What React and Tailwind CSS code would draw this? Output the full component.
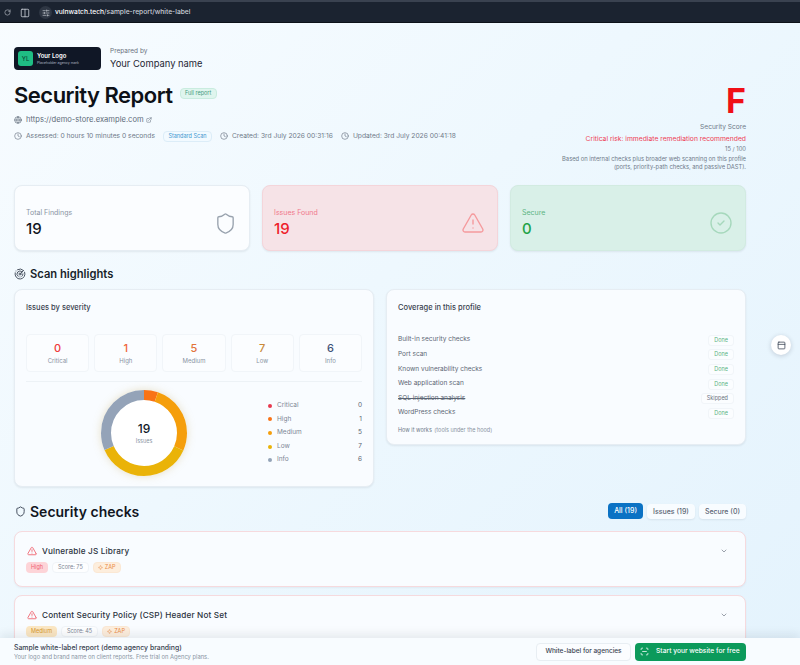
import React from "react";
import { RotateCw, Columns2, SlidersHorizontal, Globe, ExternalLink, Clock, Shield, TriangleAlert, CircleCheck, Radar, ChevronDown, ScanLine, PanelTop, Sparkle } from "lucide-react";

const severity = [
  { label: "Critical", value: 0, numClass: "text-[#ef3a3a]", dot: "bg-[#e8394f]" },
  { label: "High", value: 1, numClass: "text-[#f0643a]", dot: "bg-[#f97316]" },
  { label: "Medium", value: 5, numClass: "text-[#e2733a]", dot: "bg-[#f59e0b]" },
  { label: "Low", value: 7, numClass: "text-[#c98a3a]", dot: "bg-[#eab308]" },
  { label: "Info", value: 6, numClass: "text-[#3f5277]", dot: "bg-[#94a3b8]" },
];

const coverage = [
  { name: "Built-in security checks", status: "Done" },
  { name: "Port scan", status: "Done" },
  { name: "Known vulnerability checks", status: "Done" },
  { name: "Web application scan", status: "Done" },
  { name: "SQL injection analysis", status: "Skipped" },
  { name: "WordPress checks", status: "Done" },
];

const Donut = () => {
  const r = 38;
  const circ = 2 * Math.PI * r;
  const segs = [
    { v: 1, color: "#f97316" },
    { v: 5, color: "#f59e0b" },
    { v: 7, color: "#eab308" },
    { v: 6, color: "#94a3b8" },
  ];
  let acc = 0;
  return (
    <div className="relative w-[86px] h-[86px] rounded-full shadow-[0_0_8px_rgba(200,170,90,0.35)]">
      <svg width="86" height="86" viewBox="0 0 86 86" className="-rotate-90">
        <circle cx="43" cy="43" r="33" fill="#ffffff" />
        {segs.map((s) => {
          const len = (s.v / 19) * circ;
          const el = (
            <circle
              key={s.color}
              cx="43"
              cy="43"
              r={r}
              fill="none"
              stroke={s.color}
              strokeWidth="10"
              strokeDasharray={`${len} ${circ - len}`}
              strokeDashoffset={-acc}
            />
          );
          acc += len;
          return el;
        })}
      </svg>
      <div className="absolute inset-0 flex flex-col items-center justify-center">
        <div className="text-[12px] leading-[14px] font-medium text-[#111827]">19</div>
        <div className="text-[5.5px] leading-[8px] text-[#8b95a5] mt-[1px]">Issues</div>
      </div>
    </div>
  );
};

const StatCard = ({ label, value, box, labelClass, valueClass, icon }) => (
  <div className={`h-[66px] rounded-[8px] border pl-[11px] pr-[12px] pt-[10px] flex items-center justify-between shadow-[0_1px_2px_rgba(15,23,42,0.08)] ${box}`}>
    <div>
      <div className={`text-[7px] leading-[10px] ${labelClass}`}>{label}</div>
      <div className={`text-[15px] leading-[20px] font-medium mt-[1px] ${valueClass}`}>{value}</div>
    </div>
    {icon}
  </div>
);

const CheckCard = ({ title, level, levelClass, score }) => (
  <div className="h-[56px] rounded-[8px] border border-[#f6dade] bg-[#f9fcff] shadow-[0_1px_2px_rgba(15,23,42,0.05)] pl-[11px] pr-[17px] pt-[12px]">
    <div className="flex items-start justify-between">
      <div>
        <div className="flex items-center gap-[5px] h-[14px] ml-[1px]">
          <TriangleAlert size={10} className="text-[#ef5a66]" />
          <span className="text-[8.2px] font-medium text-[#2b3340] tracking-[0.15px]">{title}</span>
        </div>
        <div className="flex items-center gap-[4px] mt-[4px]">
          <span className={`h-[11px] px-[5px] rounded-[4px] text-[5.5px] leading-[11px] ${levelClass}`}>{level}</span>
          <span className="h-[11px] px-[5px] rounded-[4px] border border-[#f0f4f8] bg-[#fdfeff] text-[5.5px] leading-[9px] text-[#7b8594]">Score: {score}</span>
          <span className="h-[11px] px-[4px] rounded-[4px] bg-[#fdeedd] border border-[#fbe8d4] text-[5.5px] leading-[9px] text-[#ea8a45] flex items-center gap-[2px]">
            <Sparkle size={5} />
            ZAP
          </span>
        </div>
      </div>
      <ChevronDown size={8} className="text-[#6b7280] mt-[3px]" />
    </div>
  </div>
);

const App = () => {
  return (
    <div className="relative h-[665px] w-[800px] overflow-hidden font-['Inter',sans-serif] bg-[linear-gradient(135deg,#f8fcff_0%,#eef8fe_45%,#e4f3fd_100%)]">
      {/* browser bar */}
      <div className="h-[23px] bg-[#1b2330] border-t-[2px] border-t-[#3a4250] border-b border-b-[#0d1219] flex items-center pl-[4px] pt-[1px] text-[#c5cad2]">
        <RotateCw size={7} />
        <Columns2 size={10} className="ml-[9px]" />
        <div className="ml-[9px] w-[13px] h-[13px] rounded-full bg-[#2f3744] flex items-center justify-center">
          <SlidersHorizontal size={8} />
        </div>
        <span className="ml-[3px] text-[6.7px] text-[#c9ced6] font-medium">
          <span className="text-white">vulnwatch.tech</span>/sample-report/white-label
        </span>
      </div>

      <div className="pl-[14px] w-[746px]">
        {/* report header */}
        <div className="flex justify-between">
          <div className="pt-[24px]">
            <div className="flex items-center gap-[9px]">
              <div className="w-[87px] h-[23px] rounded-[4px] bg-[#101726] flex items-center pl-[4px] gap-[4px]">
                <div className="w-[15px] h-[15px] rounded-[3px] bg-[#1fbd84] text-[6px] flex items-center justify-center text-[#0c4a36] font-medium">YL</div>
                <div>
                  <div className="text-[6px] leading-[8px] font-semibold text-white">Your Logo</div>
                  <div className="text-[3.5px] leading-[6px] text-[#aeb6c4]">Placeholder agency mark</div>
                </div>
              </div>
              <div>
                <div className="text-[6.5px] leading-[9px] text-[#6b7280]">Prepared by</div>
                <div className="text-[9.4px] leading-[13px] mt-[1px] text-[#1f2733]">Your Company name</div>
              </div>
            </div>
            <div className="flex items-center mt-[10px] h-[30px]">
              <h1 className="text-[22px] font-semibold text-[#0d1117] tracking-[-0.5px]">Security Report</h1>
              <span className="ml-[7px] mb-[4px] h-[11px] w-[37px] text-center rounded-[4px] bg-[#dff5ee] border border-[#c9ecdf] text-[5.5px] leading-[9px] text-[#3f9a7c]">Full report</span>
            </div>
            <div className="flex items-center mt-[4px] h-[12px] text-[7.6px] text-[#5f6b7a]">
              <Globe size={8} className="mr-[4px]" />
              https://demo-store.example.com
              <ExternalLink size={6} className="ml-[2px]" />
            </div>
            <div className="flex items-center mt-[4px] h-[12px] text-[6.7px] text-[#6f7a89] whitespace-nowrap">
              <Clock size={8} className="mr-[4px]" />
              Assessed: 0 hours 10 minutes 0 seconds
              <span className="ml-[8px] h-[11px] w-[49px] text-center rounded-[4px] bg-[#f2faff] border border-[#dcedf8] text-[5.5px] leading-[9px] text-[#3d97cf]">Standard Scan</span>
              <Clock size={8} className="ml-[8px] mr-[4px]" />
              Created: 3rd July 2026 00:31:16
              <Clock size={8} className="ml-[8px] mr-[4px]" />
              Updated: 3rd July 2026 00:41:18
            </div>
          </div>
          <div className="text-right pt-[60px]">
            <div className="text-[34px] leading-[35px] font-bold text-[#f00f16]">F</div>
            <div className="text-[6.6px] leading-[9px] mt-[5px] text-[#6f7a89]">Security Score</div>
            <div className="text-[6.75px] leading-[9px] mt-[2px] text-[#ee4054]">Critical risk: immediate remediation recommended</div>
            <div className="text-[5.8px] leading-[8px] mt-[2px] text-[#6f7a89]">15 / 100</div>
            <div className="text-[5.8px] leading-[8px] mt-[2px] text-[#6f7a89]">Based on internal checks plus broader web scanning on this profile</div>
            <div className="text-[5.8px] leading-[8px] text-[#6f7a89]">(ports, priority-path checks, and passive DAST).</div>
          </div>
        </div>

        {/* stat cards */}
        <div className="grid grid-cols-3 gap-[12px] mt-[14px]">
          <StatCard
            label="Total Findings"
            value="19"
            box="bg-[#fbfdff] border-[#e6edf3]"
            labelClass="text-[#8a94a3]"
            valueClass="text-[#10151d]"
            icon={<Shield size={23} strokeWidth={1.4} className="text-[#98a2ae]" />}
          />
          <StatCard
            label="Issues Found"
            value="19"
            box="bg-[#f6e3e7] border-[#f4d5da]"
            labelClass="text-[#f0788a]"
            valueClass="text-[#ee2029]"
            icon={<TriangleAlert size={24} strokeWidth={1.4} className="text-[#f59a9d]" />}
          />
          <StatCard
            label="Secure"
            value="0"
            box="bg-[#d9f0e8] border-[#d2ebe1]"
            labelClass="text-[#5cb483]"
            valueClass="text-[#22a347]"
            icon={<CircleCheck size={24} strokeWidth={1.4} className="text-[#a6d8bc]" />}
          />
        </div>

        {/* scan highlights */}
        <div className="flex items-center gap-[4px] mt-[15px] h-[16px]">
          <Radar size={12} className="text-[#4b5563]" />
          <h2 className="text-[11.2px] font-semibold text-[#181f2a]">Scan highlights</h2>
        </div>
        <div className="grid grid-cols-2 gap-[12px] mt-[7px] items-start">
          <div className="h-[198px] rounded-[8px] border border-[#e6edf3] bg-[#f9fcff] shadow-[0_1px_2px_rgba(15,23,42,0.08)] px-[11px] pt-[12px]">
            <div className="text-[7.5px] leading-[12px] font-medium text-[#39424f]">Issues by severity</div>
            <div className="grid grid-cols-5 gap-[5px] mt-[20px]">
              {severity.map((s) => (
                <div key={s.label} className="h-[38px] rounded-[4px] border border-[#f1f5f9] bg-[#fbfdff] flex flex-col items-center justify-center">
                  <div className={`text-[11px] leading-[14px] font-medium ${s.numClass}`}>{s.value}</div>
                  <div className="text-[6px] leading-[9px] mt-[1px] text-[#8a94a3]">{s.label}</div>
                </div>
              ))}
            </div>
            <div className="h-px bg-[#edf2f6] mt-[9px]" />
            <div className="flex items-center mt-[8px]">
              <div className="ml-[75px]"><Donut /></div>
              <div className="ml-[81px] flex-1">
                {severity.map((s) => (
                  <div key={s.label} className="flex items-center h-[13.6px] text-[6.5px]">
                    <span className={`w-[4px] h-[4px] rounded-full ${s.dot}`} />
                    <span className="ml-[5px] text-[#7d8795]">{s.label}</span>
                    <span className="ml-auto text-[#5b6573]">{s.value}</span>
                  </div>
                ))}
              </div>
            </div>
          </div>
          <div className="h-[156px] rounded-[8px] border border-[#e6edf3] bg-[#f9fcff] shadow-[0_1px_2px_rgba(15,23,42,0.08)] px-[11px] pt-[12px]">
            <div className="text-[7.5px] leading-[12px] font-medium text-[#39424f]">Coverage in this profile</div>
            <div className="mt-[19px]">
              {coverage.map((c) => (
                <div key={c.name} className="flex items-center justify-between h-[14.6px]">
                  <span className={`text-[6.5px] text-[#5b6573] ${c.status === "Skipped" ? "line-through" : ""}`}>{c.name}</span>
                  <span className={`h-[11px] px-[5px] rounded-[3px] border border-[#f1f5f9] bg-[#fbfdff] text-[5.5px] leading-[9px] ${c.status === "Done" ? "text-[#5cb483]" : "text-[#6b7280]"}`}>{c.status}</span>
                </div>
              ))}
            </div>
            <div className="text-[5.5px] leading-[8px] mt-[5px] text-[#6f7a89]">How it works <span className="ml-[1px] text-[#8a94a3]">(tools under the hood)</span></div>
          </div>
        </div>

        {/* security checks */}
        <div className="flex items-center justify-between mt-[16px] h-[16px]">
          <div className="flex items-center gap-[4px]">
            <Shield size={11} className="text-[#374151] ml-[1px]" />
            <h2 className="text-[14px] font-semibold text-[#11161f]">Security checks</h2>
          </div>
          <div className="flex items-center gap-[4px] text-[7px] font-medium">
            <span className="h-[16px] px-[6px] rounded-[4px] bg-[#0b72c4] text-white leading-[16px]">All (19)</span>
            <span className="h-[15px] px-[6px] rounded-[4px] bg-[#f8fcff] text-[#5b6573] leading-[15px] shadow-[0_1px_2px_rgba(15,23,42,0.08)]">Issues (19)</span>
            <span className="h-[15px] px-[6px] rounded-[4px] bg-[#f8fcff] text-[#5b6573] leading-[15px] shadow-[0_1px_2px_rgba(15,23,42,0.08)]">Secure (0)</span>
          </div>
        </div>
        <div className="flex flex-col gap-[8px] mt-[12px]">
          <CheckCard title="Vulnerable JS Library" level="High" levelClass="bg-[#fdd4d8] text-[#f0606f]" score="75" />
          <CheckCard title="Content Security Policy (CSP) Header Not Set" level="Medium" levelClass="bg-[#fbe7c4] text-[#d89a2e]" score="45" />
        </div>
      </div>

      {/* floating side button */}
      <div className="absolute left-[771px] top-[335px] w-[20px] h-[20px] rounded-full bg-white shadow-[0_1px_5px_rgba(15,23,42,0.18)] flex items-center justify-center">
        <PanelTop size={9} className="text-[#374151]" />
      </div>

      {/* sticky footer */}
      <div className="absolute left-0 right-0 bottom-0 h-[27px] bg-[#f8fcff] shadow-[0_-4px_10px_rgba(15,23,42,0.08)] flex items-center justify-between pl-[14px] pr-[54px]">
        <div>
          <div className="text-[6.9px] leading-[9px] font-medium text-[#39424f]">Sample white-label report (demo agency branding)</div>
          <div className="text-[5.8px] leading-[8px] mt-[1px] text-[#8a94a3]">Your logo and brand name on client reports. Free trial on Agency plans.</div>
        </div>
        <div className="flex items-center gap-[4px] text-[6.5px] font-medium">
          <span className="h-[18px] w-[95px] rounded-[4px] border border-[#e8eef3] bg-[#fbfdff] text-[#39424f] flex items-center justify-center">White-label for agencies</span>
          <span className="h-[18px] w-[111px] rounded-[4px] bg-[#0c9a5b] text-white flex items-center pl-[5px] gap-[7px] text-[6.7px]">
            <ScanLine size={9} />
            Start your website for free
          </span>
        </div>
      </div>
    </div>
  );
};

export default App;
